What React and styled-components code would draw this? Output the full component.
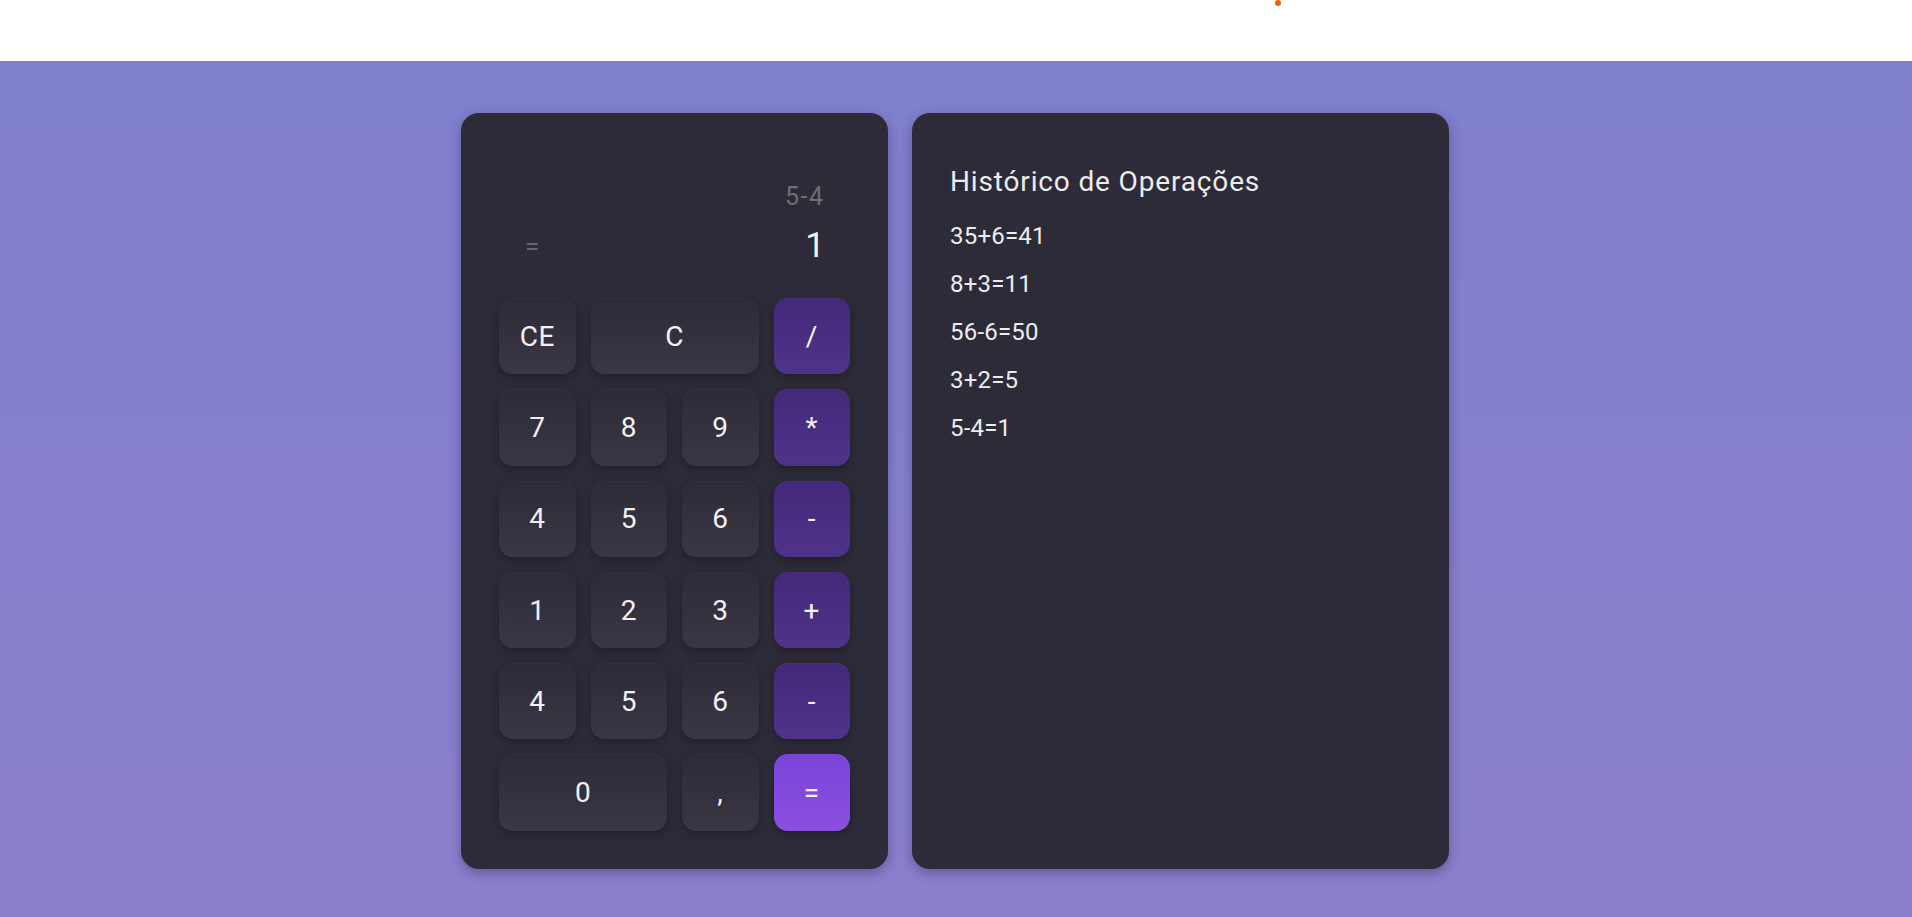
import styled, { createGlobalStyle } from "styled-components";

//Global
const GlobalStyle = createGlobalStyle`
  * {
    box-sizing: border-box;
    margin: 0;
    padding: 0;
  }
  body {
    font-family: Roboto, "Liberation Sans", sans-serif;
    background: #ffffff;
  }
`;

//Data
const keys = [
  { label: "CE" },
  { label: "C", span: 2 },
  { label: "/", kind: "op" },
  { label: "7" },
  { label: "8" },
  { label: "9" },
  { label: "*", kind: "op" },
  { label: "4" },
  { label: "5" },
  { label: "6" },
  { label: "-", kind: "op" },
  { label: "1" },
  { label: "2" },
  { label: "3" },
  { label: "+", kind: "op" },
  { label: "4" },
  { label: "5" },
  { label: "6" },
  { label: "-", kind: "op" },
  { label: "0", span: 2 },
  { label: "," },
  { label: "=", kind: "equal" },
];

const history = ["35+6=41", "8+3=11", "56-6=50", "3+2=5", "5-4=1"];

const App = () => {
  return (
    <>
      <GlobalStyle />
      <Header>
        <Dot />
      </Header>
      <Main>
        <Calculator>
          <Display>
            <Expression>5-4</Expression>
            <ResultRow>
              <Equals>=</Equals>
              <Result>1</Result>
            </ResultRow>
          </Display>
          <Keypad>
            {keys.map((key, i) => (
              <Key key={i} $kind={key.kind} $span={key.span}>
                {key.label}
              </Key>
            ))}
          </Keypad>
        </Calculator>
        <History>
          <Title>Histórico de Operações</Title>
          <List>
            {history.map((item, i) => (
              <Item key={i}>{item}</Item>
            ))}
          </List>
        </History>
      </Main>
    </>
  );
};

const Header = styled.header`
  height: 61px;
  background: #ffffff;
  display: flex;
  padding-left: 1275px;
`;

const Dot = styled.span`
  width: 6px;
  height: 6px;
  border-radius: 50%;
  background: #ff5a0a;
`;

const Main = styled.main`
  min-height: calc(100vh - 61px);
  background: linear-gradient(180deg, #807fce 0%, #8b7fcc 100%);
  display: flex;
  justify-content: center;
  align-items: stretch;
  gap: 24px;
  padding: 52px 2px 48px 0;
`;

const Panel = styled.section`
  background: #2d2b38;
  border-radius: 18px;
  box-shadow: 0 4px 12px rgba(30, 20, 60, 0.35);
`;

const Calculator = styled(Panel)`
  width: 427px;
  padding: 38px;
  display: flex;
  flex-direction: column;
`;

const Display = styled.div`
  height: 147px;
  padding: 0 25px 32px 26px;
  display: flex;
  flex-direction: column;
  justify-content: flex-end;
`;

const Expression = styled.div`
  font-size: 25px;
  line-height: 30px;
  letter-spacing: 1.5px;
  color: #6f6d74;
  text-align: right;
  margin-bottom: 14px;
  margin-right: 0.5px;
`;

const ResultRow = styled.div`
  display: flex;
  justify-content: space-between;
  align-items: center;
  height: 40px;
`;

const Equals = styled.span`
  font-size: 26px;
  line-height: 40px;
  color: #66656d;
`;

const Result = styled.span`
  font-size: 35px;
  line-height: 40px;
  color: #f2f2f2;
`;

const Keypad = styled.div`
  display: grid;
  grid-template-columns: repeat(4, 1fr);
  grid-auto-rows: 76.3px;
  gap: 15px;
`;

const backgrounds = {
  num: "linear-gradient(180deg, #2e2b38 0%, #3a3643 100%)",
  op: "linear-gradient(180deg, #44287a 0%, #4f338a 100%)",
  equal: "linear-gradient(180deg, #7a44d8 0%, #8a4fe0 100%)",
};

const Key = styled.button`
  grid-column: span ${(p) => p.$span || 1};
  border: none;
  border-radius: 14px;
  background: ${(p) => backgrounds[p.$kind || "num"]};
  box-shadow: 0 3px 8px rgba(0, 0, 0, 0.3),
    inset 0 1px 0 rgba(255, 255, 255, 0.03);
  color: #f1f1f3;
  font-family: Roboto, "Liberation Sans", sans-serif;
  font-size: 28px;
  letter-spacing: 0.5px;
  cursor: pointer;
`;

const History = styled(Panel)`
  width: 537px;
  padding: 53px 38px 40px;
`;

const Title = styled.h2`
  font-size: 28px;
  line-height: 32px;
  font-weight: 400;
  letter-spacing: 0.85px;
  color: #ececef;
  margin-bottom: 24px;
`;

const List = styled.div`
  display: flex;
  flex-direction: column;
  gap: 20px;
`;

const Item = styled.p`
  font-size: 24px;
  line-height: 28px;
  letter-spacing: 0.2px;
  color: #ececef;
`;

export default App;
